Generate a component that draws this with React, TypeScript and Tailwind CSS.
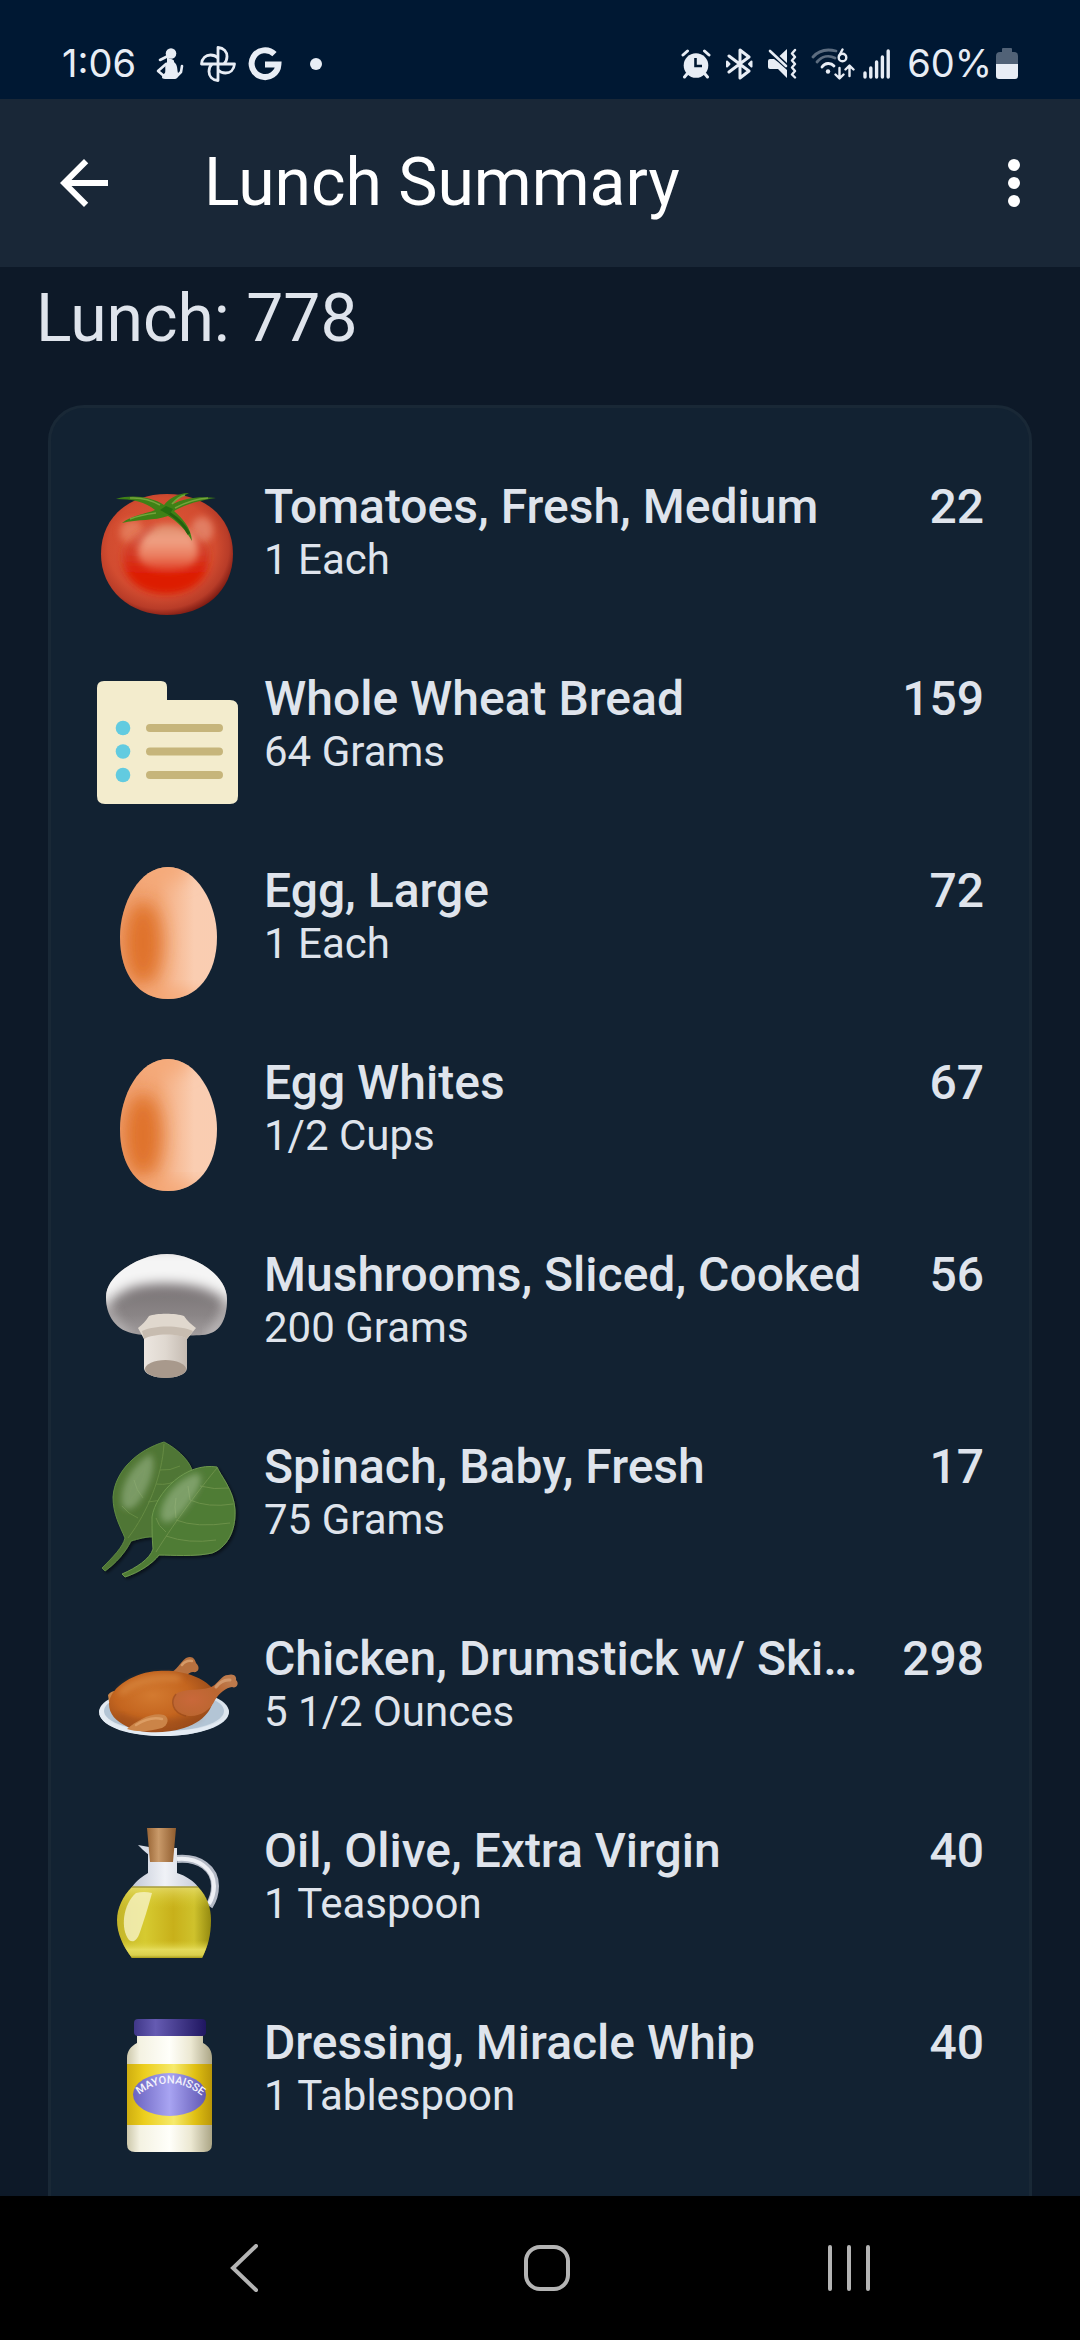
import type { ReactNode } from "react";

type Food = {
  name: string;
  amount: string;
  calories: number;
  icon: () => ReactNode;
};

const TomatoIcon = () => (
  <svg viewBox="0 0 144 144" className="size-36 shrink-0" aria-hidden="true">
    <defs>
      <radialGradient id="tomato-skin" cx="0.46" cy="0.44" r="0.58">
        <stop offset="0" stopColor="#e2583a" />
        <stop offset="0.7" stopColor="#d24c30" />
        <stop offset="0.88" stopColor="#b83c28" />
        <stop offset="1" stopColor="#7c1a12" />
      </radialGradient>
      <linearGradient id="tomato-shine" x1="0" y1="0" x2="0" y2="1">
        <stop offset="0" stopColor="#dd8a68" />
        <stop offset="0.35" stopColor="#f0a184" />
        <stop offset="0.7" stopColor="#ea7a5c" />
        <stop offset="1" stopColor="#e03a20" />
      </linearGradient>
      <linearGradient id="tomato-red" x1="0" y1="0" x2="0" y2="1">
        <stop offset="0" stopColor="#cf4a34" stopOpacity="0.1" />
        <stop offset="0.4" stopColor="#d23520" stopOpacity="0.8" />
        <stop offset="0.7" stopColor="#de1c05" />
        <stop offset="1" stopColor="#dc1c05" />
      </linearGradient>
      <filter id="tomato-soft" x="-50%" y="-50%" width="200%" height="200%">
        <feGaussianBlur stdDeviation="3.5" />
      </filter>
    </defs>
    <path d="M71 14C110 14 137 38 137 74C137 111 108 135 71 135C34 135 5 110 5 74C5 38 32 14 71 14Z" fill="url(#tomato-skin)" />
    <ellipse cx="36" cy="52" rx="12" ry="12" fill="#e88a68" opacity="0.7" filter="url(#tomato-soft)" />
    <ellipse cx="106" cy="50" rx="11" ry="13" fill="#e4866c" opacity="0.85" filter="url(#tomato-soft)" />
    <path d="M27 78C27 60 44 46 70 46C96 46 113 60 113 78C113 100 94 114 70 114C46 114 27 100 27 78Z" fill="url(#tomato-red)" filter="url(#tomato-soft)" />
    <path d="M42 72C42 56 54 44 72 44C90 44 102 56 102 72C102 84 90 91 72 91C54 91 42 84 42 72Z" fill="url(#tomato-shine)" filter="url(#tomato-soft)" />
    <path d="M58 46Q44 54 40 66" fill="none" stroke="#c64a3c" strokeWidth="4" opacity="0.6" filter="url(#tomato-soft)" />
    <path d="M20 19C36 14 56 17 68 25C72 20 80 13 93 13C85 17 80 20 77 24C88 18 104 16 120 18C104 20 88 25 78 31C86 38 95 47 96 61C90 50 81 41 72 36C58 41 42 39 26 43C36 35 50 34 59 30C50 22 36 19 20 19Z" fill="#3f8116" />
    <path d="M64 25Q50 17 34 18M79 28Q96 19 112 18M76 24Q82 17 89 15M60 33Q44 35 34 39" fill="none" stroke="#82ad45" strokeWidth="1.5" opacity="0.8" />
    <path d="M73 33Q87 42 93 54" fill="none" stroke="#24600f" strokeWidth="3" />
    <path d="M64 30L70 26L77 29L73 35Z" fill="#256f10" />
  </svg>
);

const CustomFoodIcon = () => (
  <svg viewBox="0 0 144 144" className="size-36 shrink-0" aria-hidden="true">
    <path d="M8 9H65Q71 9 71 15V28H134Q142 28 142 36V124Q142 132 134 132H9Q1 132 1 124V16Q1 9 8 9Z" fill="#f3eccd" />
    <g fill="#62cbe0">
      <circle cx="27" cy="56" r="7.3" />
      <circle cx="27" cy="79.5" r="7.3" />
      <circle cx="27" cy="103" r="7.3" />
    </g>
    <path d="M54 56H123M54 79.5H123M54 103H123" stroke="#c6b57b" strokeWidth="8" strokeLinecap="round" />
  </svg>
);

const EggIcon = () => (
  <svg viewBox="0 0 144 144" className="size-36 shrink-0" aria-hidden="true">
    <defs>
      <linearGradient id="egg-shell" x1="0" y1="0" x2="1" y2="0">
        <stop offset="0.15" stopColor="#f0a070" />
        <stop offset="0.42" stopColor="#f3a878" />
        <stop offset="0.68" stopColor="#facdb1" />
        <stop offset="1" stopColor="#f9cdb2" />
      </linearGradient>
      <filter id="egg-soft" x="-100%" y="-60%" width="300%" height="220%">
        <feGaussianBlur stdDeviation="9" />
      </filter>
      <clipPath id="egg-clip">
        <path d="M72 3C101 3 121 40 121 73C121 111 101 135 72 135C43 135 24 111 24 73C24 40 43 3 72 3Z" />
      </clipPath>
    </defs>
    <g clipPath="url(#egg-clip)">
      <rect width="144" height="144" fill="url(#egg-shell)" />
      <ellipse cx="47" cy="79" rx="19" ry="42" fill="#de7026" opacity="0.95" filter="url(#egg-soft)" />
      <ellipse cx="76" cy="136" rx="36" ry="9" fill="#f5a673" filter="url(#egg-soft)" />
      <ellipse cx="66" cy="4" rx="30" ry="14" fill="#f5aa7a" filter="url(#egg-soft)" />
    </g>
  </svg>
);

const MushroomIcon = () => (
  <svg viewBox="0 0 144 144" className="size-36 shrink-0" aria-hidden="true">
    <defs>
      <linearGradient id="cap" x1="0" y1="0" x2="0" y2="1">
        <stop offset="0.4" stopColor="#7a7476" />
        <stop offset="0.7" stopColor="#8a8586" />
        <stop offset="1" stopColor="#aca7a8" />
      </linearGradient>
      <linearGradient id="stem" x1="0" y1="0" x2="1" y2="0">
        <stop offset="0" stopColor="#ece6e0" />
        <stop offset="0.5" stopColor="#dfd8d0" />
        <stop offset="1" stopColor="#c5bbb2" />
      </linearGradient>
      <filter id="cap-soft" x="-30%" y="-50%" width="160%" height="200%">
        <feGaussianBlur stdDeviation="6" />
      </filter>
      <clipPath id="cap-clip">
        <path d="M71 6C96 6 131 26 131 51C131 72 124 86 106 87C90 88 50 88 40 86C20 83 10 68 10 49C10 26 45 6 71 6Z" />
      </clipPath>
    </defs>
    <g clipPath="url(#cap-clip)">
      <rect width="144" height="96" fill="url(#cap)" />
      <path d="M0 0H144V60C138 58 128 50 116 44C98 34 48 32 28 43C18 49 8 58 0 62Z" fill="#f5f5f5" filter="url(#cap-soft)" />
      <path d="M132 46Q132 74 112 90" fill="none" stroke="#e8e6e6" strokeWidth="7" opacity="0.7" filter="url(#cap-soft)" />
      <path d="M9 46Q10 74 32 88" fill="none" stroke="#e8e6e6" strokeWidth="7" opacity="0.6" filter="url(#cap-soft)" />
    </g>
    <path d="M48 84V120C48 133 91 133 91 120V84Z" fill="url(#stem)" />
    <path d="M53 68C60 65 80 65 88 68C91 73 96 77 100 80L91 91C84 85 57 85 48 91L42 80C46 77 50 73 53 68Z" fill="#e0d8ce" />
    <path d="M46 83C58 77 84 77 97 83L91 91C84 85 57 85 48 91Z" fill="#c7bcb0" />
    <ellipse cx="69.5" cy="121" rx="20.5" ry="9" fill="#a8998c" />
  </svg>
);

const SpinachIcon = () => (
  <svg viewBox="0 0 144 144" className="size-36 shrink-0" aria-hidden="true">
    <defs>
      <filter id="leaf-soft" x="-40%" y="-40%" width="180%" height="180%">
        <feGaussianBlur stdDeviation="3" />
      </filter>
      <filter id="leaf-shadow" x="-10%" y="-10%" width="125%" height="125%">
        <feDropShadow dx="2" dy="2" stdDeviation="1.5" floodColor="#000000" floodOpacity="0.5" />
      </filter>
    </defs>
    <g filter="url(#leaf-shadow)">
      <path d="M68 2C78 7 92 18 96 30C88 56 72 80 60 97C51 96 42 99 35 101C29 113 20 123 9 131L6 128C17 117 27 107 29 98C24 86 17 74 17 57C19 30 42 10 68 2Z" fill="#507634" stroke="#5f8a42" strokeWidth="1" />
      <path d="M68 4C66 36 52 72 32 98M64 30Q74 31 84 26M60 44Q74 46 84 38M52 62L66 60M47 58Q40 50 38 40M42 78Q32 74 26 66" fill="none" stroke="#658b43" strokeWidth="1" />
      <path d="M54 14C60 20 58 36 48 54C42 66 34 72 28 68C22 60 26 32 54 14Z" fill="#a5bf96" opacity="0.5" filter="url(#leaf-soft)" />
    </g>
    <g filter="url(#leaf-shadow)">
      <path d="M121 27C124 35 138 50 139 70C140 92 130 108 116 113C98 117 76 115 63 115C57 123 44 132 29 137L26 134C40 128 54 119 57 109C56 98 56 88 56 77C60 52 90 22 121 27Z" fill="#507b36" stroke="#6d984c" strokeWidth="1" />
      <path d="M121 28C106 46 80 80 60 112M104 46Q118 50 133 48M94 60Q112 68 137 64M80 80Q100 88 134 83M70 96Q92 104 120 100M94 60L92 46M80 78Q78 66 80 58M70 92Q62 86 60 78" fill="none" stroke="#6b9148" strokeWidth="1" />
      <path d="M100 33C112 36 100 54 90 68C80 80 70 86 66 80C60 70 74 42 100 33Z" fill="#abc49b" opacity="0.5" filter="url(#leaf-soft)" />
    </g>
  </svg>
);

const ChickenIcon = () => (
  <svg viewBox="0 0 144 144" className="size-36 shrink-0" aria-hidden="true">
    <defs>
      <linearGradient id="plate" x1="0" y1="0" x2="1" y2="0">
        <stop offset="0" stopColor="#e6edf4" />
        <stop offset="0.6" stopColor="#bccbd9" />
        <stop offset="1" stopColor="#dfe8f0" />
      </linearGradient>
      <radialGradient id="roast" cx="0.42" cy="0.4" r="0.65">
        <stop offset="0" stopColor="#d37a30" />
        <stop offset="0.55" stopColor="#c4651f" />
        <stop offset="1" stopColor="#94481a" />
      </radialGradient>
      <radialGradient id="thigh" cx="0.3" cy="0.6" r="0.7">
        <stop offset="0" stopColor="#c9683a" />
        <stop offset="0.6" stopColor="#bb6630" />
        <stop offset="1" stopColor="#bd7a4c" />
      </radialGradient>
      <filter id="roast-soft" x="-30%" y="-60%" width="160%" height="220%">
        <feGaussianBlur stdDeviation="3" />
      </filter>
    </defs>
    <ellipse cx="68" cy="80" rx="65" ry="24" fill="url(#plate)" />
    <ellipse cx="68" cy="79" rx="60" ry="20" fill="#b3c5d5" />
    <path d="M3 81C6 96 34 104 68 104C102 104 130 94 133 80C128 92 100 99 68 99C36 99 10 92 3 81Z" fill="#e3ebf3" />
    <path d="M72 42C82 38 84 30 90 26C97 23 99 28 100 31C105 36 102 41 97 40C92 40 90 46 82 48Z" fill="#b8713f" />
    <path d="M86 33Q90 28 96 29" fill="none" stroke="#d59a68" strokeWidth="2.5" strokeLinecap="round" />
    <path d="M12 63C16 57 22 60 26 58L22 68L13 70Z" fill="#c98446" />
    <path d="M13 72C14 54 40 40 62 39C86 37 108 46 116 56C121 72 112 88 88 96C66 103 42 101 30 94C20 89 13 82 13 72Z" fill="url(#roast)" />
    <path d="M26 60C40 48 60 45 82 46" fill="none" stroke="#e0954e" strokeWidth="6" strokeLinecap="round" opacity="0.6" filter="url(#roast-soft)" />
    <path d="M22 84C40 92 76 96 104 84" fill="none" stroke="#8a4016" strokeWidth="5" opacity="0.4" filter="url(#roast-soft)" />
    <path d="M80 62C90 55 108 60 117 54C122 51 126 43 132 43C138 41 141 45 140 48C144 52 140 57 136 55C130 56 124 60 119 68C114 80 98 88 86 82C76 78 74 68 80 62Z" fill="url(#thigh)" />
    <path d="M120 55Q126 47 134 48" fill="none" stroke="#d7a074" strokeWidth="3" strokeLinecap="round" opacity="0.8" />
    <path d="M80 62C74 69 76 81 90 84" fill="none" stroke="#8e421a" strokeWidth="1.5" opacity="0.5" />
    <path d="M31 97C42 88 56 80 68 83C74 86 72 93 66 96C54 99 44 101 31 97Z" fill="#cb8448" />
    <path d="M40 93Q54 84 66 87" fill="none" stroke="#e2a871" strokeWidth="2.5" strokeLinecap="round" opacity="0.7" />
  </svg>
);

const OilIcon = () => (
  <svg viewBox="0 0 144 144" className="size-36 shrink-0" aria-hidden="true">
    <defs>
      <linearGradient id="oil" x1="0" y1="0" x2="1" y2="0">
        <stop offset="0" stopColor="#c4b52a" />
        <stop offset="0.3" stopColor="#d6ca30" />
        <stop offset="0.6" stopColor="#c8b01a" />
        <stop offset="0.82" stopColor="#cfc22c" />
        <stop offset="1" stopColor="#948a10" />
      </linearGradient>
      <linearGradient id="oil-base" x1="0" y1="0" x2="0" y2="1">
        <stop offset="0" stopColor="#ebe37c" stopOpacity="0.7" />
        <stop offset="0.3" stopColor="#d8cc30" stopOpacity="0" />
        <stop offset="0.75" stopColor="#d8cc30" stopOpacity="0" />
        <stop offset="0.88" stopColor="#e6de60" stopOpacity="0.9" />
        <stop offset="0.96" stopColor="#d9cf4c" />
        <stop offset="1" stopColor="#a89c1c" />
      </linearGradient>
      <linearGradient id="cork" x1="0" y1="0" x2="1" y2="0">
        <stop offset="0" stopColor="#9a6636" />
        <stop offset="0.4" stopColor="#c99a6a" />
        <stop offset="1" stopColor="#8f5c2e" />
      </linearGradient>
      <linearGradient id="glass" x1="0" y1="0" x2="1" y2="0">
        <stop offset="0" stopColor="#c3c9d6" />
        <stop offset="0.5" stopColor="#f0f2f7" />
        <stop offset="1" stopColor="#c9ceda" />
      </linearGradient>
    </defs>
    <path d="M81 35C104 33 119 45 119 62C119 70 117 76 113 82" fill="none" stroke="#b4bac6" strokeWidth="8" />
    <path d="M81 35C102 33 118 45 118 62C118 70 116 75 113 80" fill="none" stroke="#eef0f5" strokeWidth="4" />
    <path d="M42 21L53 23V31C48 27 45 24 42 21Z" fill="#d9dee8" />
    <path d="M52 24H81V49C90 52 98 57 102 63H36C41 56 47 52 52 49Z" fill="url(#glass)" />
    <path d="M51 4H80L77 38H54Z" fill="url(#cork)" />
    <path d="M36 63H102C111 72 115 84 115 96C115 111 112 122 106 134H36C27 122 21 110 21 96C21 84 27 72 36 63Z" fill="url(#oil)" />
    <path d="M36 63H102C111 72 115 84 115 96C115 111 112 122 106 134H36C27 122 21 110 21 96C21 84 27 72 36 63Z" fill="url(#oil-base)" />
    <path d="M40 69Q48 67 56 69C52 84 48 96 44 108C41 117 37 119 33 116C24 105 27 80 40 69Z" fill="#f6f3c4" opacity="0.8" />
    <path d="M36 63H102" stroke="#a79c3a" strokeWidth="1.5" />
  </svg>
);

const DressingIcon = () => (
  <svg viewBox="0 0 144 144" className="size-36 shrink-0" aria-hidden="true">
    <defs>
      <linearGradient id="lid" x1="0" y1="0" x2="1" y2="0">
        <stop offset="0" stopColor="#3f3788" />
        <stop offset="0.3" stopColor="#655bb2" />
        <stop offset="1" stopColor="#1f1660" />
      </linearGradient>
      <linearGradient id="jar" x1="0" y1="0" x2="1" y2="0">
        <stop offset="0" stopColor="#cdc8ab" />
        <stop offset="0.15" stopColor="#f4f2e2" />
        <stop offset="0.5" stopColor="#fffffa" />
        <stop offset="0.75" stopColor="#ece8d2" />
        <stop offset="1" stopColor="#aba585" />
      </linearGradient>
      <linearGradient id="label" x1="0" y1="0" x2="1" y2="0">
        <stop offset="0" stopColor="#cfae10" />
        <stop offset="0.2" stopColor="#ecce1d" />
        <stop offset="0.55" stopColor="#f6ea6c" />
        <stop offset="0.8" stopColor="#e0c013" />
        <stop offset="1" stopColor="#b99608" />
      </linearGradient>
      <linearGradient id="badge" x1="0" y1="0" x2="1" y2="0">
        <stop offset="0" stopColor="#6b63c0" />
        <stop offset="0.5" stopColor="#a8a4f2" />
        <stop offset="1" stopColor="#6158b4" />
      </linearGradient>
      <path id="badge-arc" d="M43 79Q74 55 106 80" />
    </defs>
    <path d="M41 18H107V27C113 30 116 35 116 42V128Q116 136 108 136H39Q31 136 31 128V42C31 35 35 30 41 27Z" fill="url(#jar)" />
    <rect x="31" y="48" width="85" height="61" fill="url(#label)" />
    <rect x="38" y="3" width="72" height="17" rx="4" fill="url(#lid)" />
    <ellipse cx="73.5" cy="78.5" rx="36.5" ry="21.5" fill="url(#badge)" />
    <text fill="#f4f3fc" fontSize="11" fontWeight="500" fontFamily="Roboto, sans-serif">
      <textPath href="#badge-arc">MAYONAISSE</textPath>
    </text>
  </svg>
);

const foods: Food[] = [
  { name: "Tomatoes, Fresh, Medium", amount: "1 Each", calories: 22, icon: TomatoIcon },
  { name: "Whole Wheat Bread", amount: "64 Grams", calories: 159, icon: CustomFoodIcon },
  { name: "Egg, Large", amount: "1 Each", calories: 72, icon: EggIcon },
  { name: "Egg Whites", amount: "1/2 Cups", calories: 67, icon: EggIcon },
  { name: "Mushrooms, Sliced, Cooked", amount: "200 Grams", calories: 56, icon: MushroomIcon },
  { name: "Spinach, Baby, Fresh", amount: "75 Grams", calories: 17, icon: SpinachIcon },
  { name: "Chicken, Drumstick w/ Ski…", amount: "5 1/2 Ounces", calories: 298, icon: ChickenIcon },
  { name: "Oil, Olive, Extra Virgin", amount: "1 Teaspoon", calories: 40, icon: OilIcon },
  { name: "Dressing, Miracle Whip", amount: "1 Tablespoon", calories: 40, icon: DressingIcon },
];

const StatusBar = () => (
  <div className="flex h-[99px] shrink-0 items-center justify-between bg-[#001833] px-[62px] pt-7 font-[Inter,sans-serif] text-[38px] text-[#e8edf5]">
    <div className="flex items-center">
      <span>1:06</span>
      <svg viewBox="0 0 28 32" className="ml-5 h-8 w-7" aria-hidden="true">
        <circle cx="15" cy="5.5" r="5.3" fill="currentColor" />
        <path d="M11 9C15 12 19 11 18 14C22 17 21 22 22 25C23 29 21 31 18 31H9C5 31 5 28 9 25C10 21 8 17 11 14Z" fill="currentColor" />
        <path d="M4 12L11 8.5M10 16L2 23L8 28M21 28L25 24L26 18" fill="none" stroke="currentColor" strokeWidth="2.6" strokeLinecap="round" strokeLinejoin="round" />
      </svg>
      <svg viewBox="0 0 36 36" className="ml-4 size-9" fill="none" stroke="currentColor" strokeWidth="2.8" strokeLinejoin="round" aria-hidden="true">
        <path d="M18 18V1.5C24 2 27 6 27 10.5C27 13.5 26 16 24 18" />
        <path d="M18 18H34.5C34 24 30 27 25.5 27C22.5 27 20 26 18 24" />
        <path d="M18 18V34.5C12 34 9 30 9 25.5C9 22.5 10 20 12 18" />
        <path d="M18 18H1.5C2 12 6 9 10.5 9C13.5 9 16 10 18 12" />
      </svg>
      <svg viewBox="0 0 34 34" className="ml-3 size-[34px]" fill="none" stroke="currentColor" strokeWidth="6" aria-hidden="true">
        <path d="M26.5 7.2A13.4 13.4 0 1 0 30.4 17.5H17" />
      </svg>
      <span className="ml-7 size-3 rounded-full bg-current" />
    </div>
    <div className="flex items-center">
      <svg viewBox="0 0 30 30" className="size-[30px]" aria-hidden="true">
        <circle cx="15" cy="16.5" r="12.3" fill="currentColor" />
        <path d="M2 6L6.5 2M28 6L23.5 2M6 25L3.5 28M24 25L26.5 28" stroke="currentColor" strokeWidth="3" strokeLinecap="round" />
        <path d="M14.5 9V17H21" fill="none" stroke="#001833" strokeWidth="2.6" />
      </svg>
      <svg viewBox="0 0 28 32" className="ml-[14px] h-8 w-7" fill="none" stroke="currentColor" strokeWidth="3" strokeLinecap="round" strokeLinejoin="round" aria-hidden="true">
        <path d="M4 8L24 23L15 30V2L24 9L4 24" />
        <path d="M2 13.5L4.5 16L2 18.5ZM26.500 13.5L24 16L26.500 18.5Z" strokeWidth="2" fill="currentColor" />
      </svg>
      <svg viewBox="0 0 30 31" className="ml-[14px] h-[31px] w-[30px]" aria-hidden="true">
        <path d="M1 13Q1 11 3 11H7L11 14L20 22V30L11 21H3Q1 21 1 19ZM20 1V15L12.5 8Z" fill="currentColor" />
        <path d="M3 3L19 18" stroke="currentColor" strokeWidth="2.6" strokeLinecap="round" />
        <path d="M28 2L25 5.5L28 9L25 12.5L28 16L25 19.5L28 23L25 26.5L28 29.5" fill="none" stroke="currentColor" strokeWidth="2.4" strokeLinecap="round" strokeLinejoin="round" />
      </svg>
      <svg viewBox="0 0 44 32" className="ml-[14px] h-8 w-11" fill="none" stroke="currentColor" strokeWidth="2.8" strokeLinecap="round" strokeLinejoin="round" aria-hidden="true">
        <path d="M2 9C8 2 17 1 25 3" opacity="0.4" />
        <path d="M6 14C11 8 18 7 24 10" opacity="0.4" />
        <path d="M11 19C14 14.5 20 14.5 23 18" />
        <circle cx="17" cy="23.5" r="2.2" fill="currentColor" stroke="none" />
        <circle cx="31.5" cy="9.5" r="3.8" strokeWidth="2.4" />
        <path d="M28 8L31.5 1.5" strokeWidth="2.4" />
        <path d="M28.5 20V30M24.5 26.5L28.5 30.5L32.5 26.5M38.5 28V18M34.5 21.5L38.5 17.5L42.5 21.5" strokeWidth="2.4" />
      </svg>
      <svg viewBox="0 0 28 30" className="ml-2 h-[30px] w-7" stroke="currentColor" strokeWidth="3.4" strokeLinecap="round" aria-hidden="true">
        <path d="M2 24V28M7.8 19V28M13.6 13V28M19.4 8V28M25.2 2V28" />
      </svg>
      <span className="ml-4">60%</span>
      <svg viewBox="0 0 22 32" className="ml-1 h-8 w-[22px]" fill="currentColor" aria-hidden="true">
        <path d="M6 1Q6 0 7 0H15Q16 0 16 1V4H18Q22 4 22 8V16H0V8Q0 4 4 4H6Z" opacity="0.35" />
        <path d="M0 16H22V28Q22 31 19 31H3Q0 31 0 28Z" />
      </svg>
    </div>
  </div>
);

const FoodRow = ({ food }: { food: Food }) => (
  <li className="flex items-start gap-6 py-6">
    <food.icon />
    <div className="min-w-0 flex-1 whitespace-nowrap">
      <p className="text-[48px] leading-[54px] font-medium">{food.name}</p>
      <p className="text-[42px] leading-[52px]">{food.amount}</p>
    </div>
    <span className="text-right text-[48px] leading-[54px] font-medium">{food.calories}</span>
  </li>
);

const App = () => {
  return (
    <div className="flex h-screen flex-col bg-[#0d1928] font-[Roboto,sans-serif] text-[#dfe4ec]">
      <StatusBar />

      {/* App bar */}
      <header className="flex h-[168px] shrink-0 items-center bg-[#192737] pr-[30px] pl-12 text-white">
        <button type="button" aria-label="Back">
          <svg viewBox="0 0 24 24" className="size-[72px]" fill="currentColor" aria-hidden="true">
            <path d="M20 11H7.83l5.59-5.59L12 4l-8 8 8 8 1.41-1.41L7.83 13H20v-2z" />
          </svg>
        </button>
        <h1 className="ml-[84px] flex-1 text-[66px] leading-[80px]">Lunch Summary</h1>
        <button type="button" aria-label="More options">
          <svg viewBox="0 0 24 24" className="size-[72px]" fill="currentColor" aria-hidden="true">
            <circle cx="12" cy="6" r="2" />
            <circle cx="12" cy="12" r="2" />
            <circle cx="12" cy="18" r="2" />
          </svg>
        </button>
      </header>

      {/* Meal contents */}
      <main className="min-h-0 flex-1 overflow-hidden pt-3">
        <h2 className="px-9 text-[66px] leading-[80px]">Lunch: 778</h2>
        <ul className="mx-12 mt-[46px] rounded-[36px] border-[3px] border-[#192836] bg-[#122232] px-[45px] py-12">
          {foods.map((food) => (
            <FoodRow key={food.name} food={food} />
          ))}
        </ul>
      </main>

      {/* System navigation */}
      <nav className="flex h-36 shrink-0 items-center bg-black pr-20 pl-[94px] text-[#b4b4b4]">
        <button type="button" aria-label="System back" className="flex flex-1 justify-center">
          <svg viewBox="0 0 48 48" className="size-12" fill="none" stroke="currentColor" strokeWidth="4" strokeLinecap="round" aria-hidden="true">
            <path d="M35 2L12 24L35 46" />
          </svg>
        </button>
        <button type="button" aria-label="Home" className="flex flex-1 justify-center">
          <svg viewBox="0 0 48 48" className="size-12" fill="none" stroke="currentColor" strokeWidth="4" aria-hidden="true">
            <rect x="3" y="3" width="42" height="42" rx="14" />
          </svg>
        </button>
        <button type="button" aria-label="Recent apps" className="flex flex-1 justify-center">
          <svg viewBox="0 0 48 48" className="size-12" stroke="currentColor" strokeWidth="4" strokeLinecap="round" aria-hidden="true">
            <path d="M5 3V45M24 3V45M43 3V45" />
          </svg>
        </button>
      </nav>
    </div>
  );
};

export default App;
